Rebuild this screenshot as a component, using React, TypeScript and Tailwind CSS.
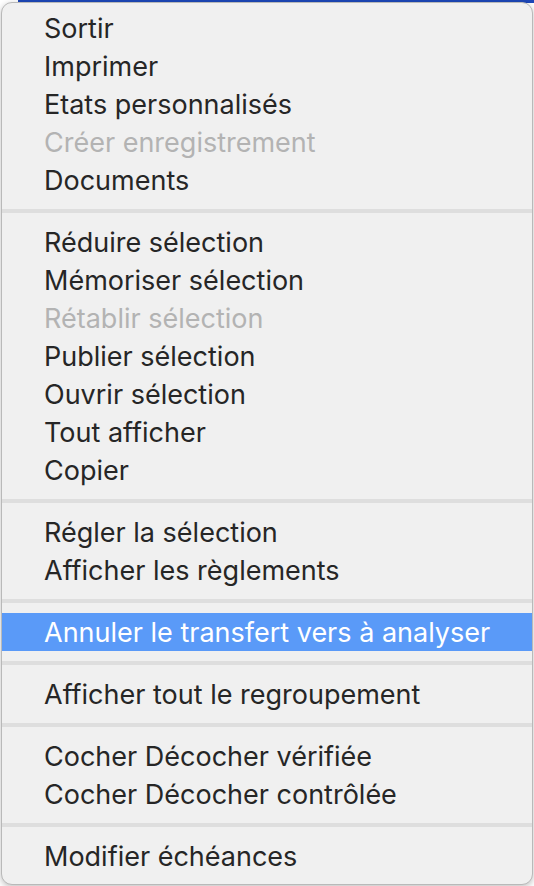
type Item = { label: string; disabled?: boolean; active?: boolean };

const groups: Item[][] = [
  [
    { label: 'Sortir' },
    { label: 'Imprimer' },
    { label: 'Etats personnalisés' },
    { label: 'Créer enregistrement', disabled: true },
    { label: 'Documents' },
  ],
  [
    { label: 'Réduire sélection' },
    { label: 'Mémoriser sélection' },
    { label: 'Rétablir sélection', disabled: true },
    { label: 'Publier sélection' },
    { label: 'Ouvrir sélection' },
    { label: 'Tout afficher' },
    { label: 'Copier' },
  ],
  [{ label: 'Régler la sélection' }, { label: 'Afficher les règlements' }],
  [{ label: 'Annuler le transfert vers à analyser', active: true }],
  [{ label: 'Afficher tout le regroupement' }],
  [{ label: 'Cocher Décocher vérifiée' }, { label: 'Cocher Décocher contrôlée' }],
  [{ label: 'Modifier échéances' }],
];

function MenuItem({ item }: { item: Item }) {
  const color = item.active
    ? 'bg-[#5a9af8] text-white'
    : item.disabled
      ? 'text-[#b3b3b3]'
      : 'text-[#262626]';
  return (
    <div className={`flex h-[38px] items-center pl-[42px] text-[27px] leading-none ${color}`}>
      {item.label}
    </div>
  );
}

export default function App() {
  return (
    <div className="relative h-[886px] w-[534px] overflow-hidden bg-white font-['Inter',sans-serif]">
      <div className="ml-[18px] h-[3px] bg-[#1d47b8]" />
      <div className="absolute left-[1px] top-[2px] h-[883px] w-[532px] rounded-[11px] border border-[#b9b9b9] bg-[#f0f0f0] pt-[6px] shadow-[0_2px_6px_rgba(0,0,0,0.25)]">
        {groups.map((group, gi) => (
          <div key={gi}>
            {gi > 0 && (
              <div className="py-[10px]">
                <div className="h-[4px] bg-[#dedede]" />
              </div>
            )}
            {group.map((item) => (
              <MenuItem key={item.label} item={item} />
            ))}
          </div>
        ))}
      </div>
    </div>
  );
}
